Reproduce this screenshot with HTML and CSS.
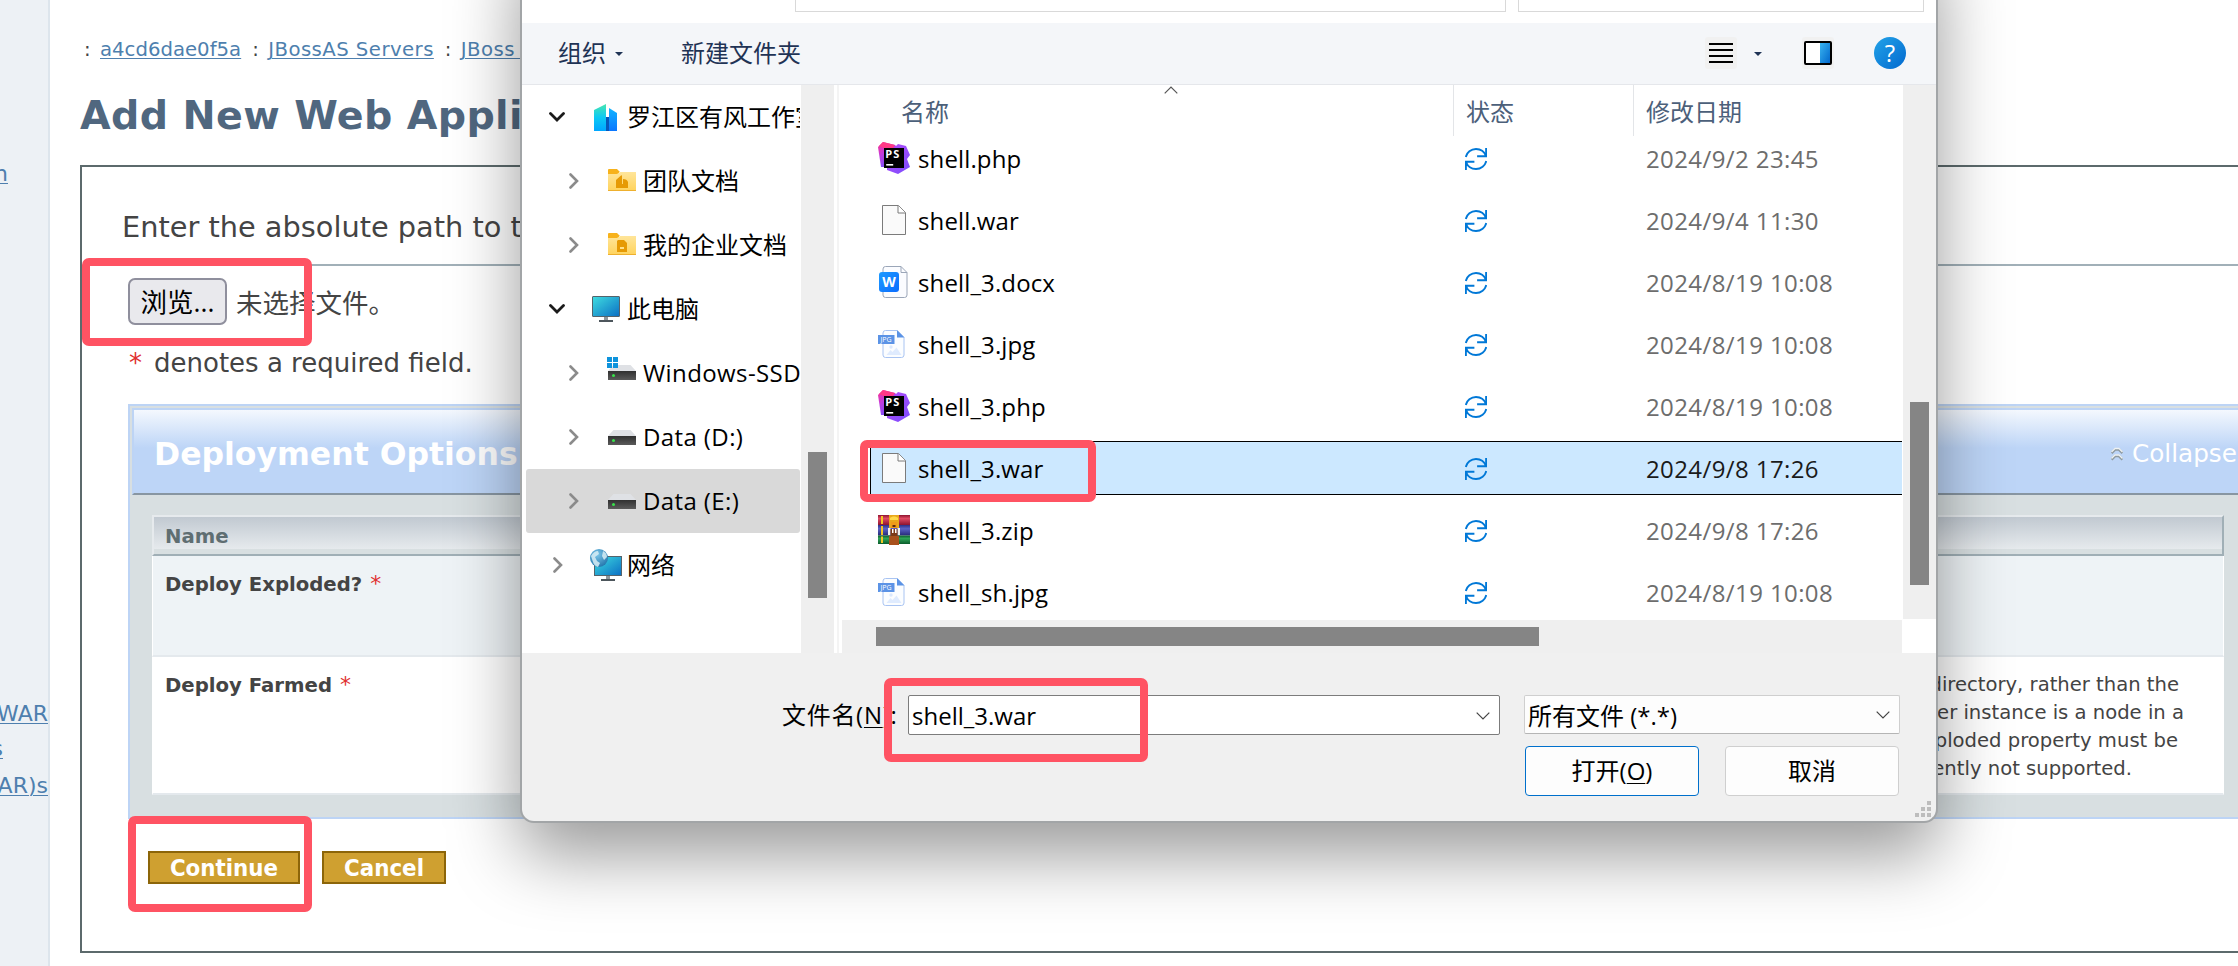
FILE: index.html
```html
<!DOCTYPE html>
<html lang="zh-CN">
<head>
<meta charset="utf-8">
<title>Add New Web Application</title>
<link rel="stylesheet" href="styles.css">
</head>
<body>
<svg class="defs" width="0" height="0" aria-hidden="true">
  <defs>
    <linearGradient id="gPink" x1="0" y1="0" x2="0.6" y2="1"><stop offset="0" stop-color="#ff318c"/><stop offset=".45" stop-color="#c03be0"/><stop offset="1" stop-color="#6b57ff"/></linearGradient>
    <linearGradient id="gViolet" x1="0" y1="0" x2="1" y2="1"><stop offset="0" stop-color="#b74af7"/><stop offset="1" stop-color="#7a4dff"/></linearGradient>
    <linearGradient id="gDoc" x1="0" y1="0" x2="1" y2="1"><stop offset="0" stop-color="#1e9bff"/><stop offset="1" stop-color="#0a6cff"/></linearGradient>
    <linearGradient id="gFolder" x1="0" y1="0" x2="0" y2="1"><stop offset="0" stop-color="#ffe59a"/><stop offset="1" stop-color="#ffd35c"/></linearGradient>
    <linearGradient id="gScreen" x1="0" y1="0" x2="1" y2="1"><stop offset="0" stop-color="#3fdde0"/><stop offset="1" stop-color="#0b6fc4"/></linearGradient>
    <linearGradient id="gTower" x1="0" y1="0" x2="0" y2="1"><stop offset="0" stop-color="#49e6b0"/><stop offset=".5" stop-color="#0cc9f4"/><stop offset="1" stop-color="#00a6ff"/></linearGradient>
    <linearGradient id="gTower2" x1="0" y1="0" x2="0" y2="1"><stop offset="0" stop-color="#11b4ff"/><stop offset="1" stop-color="#0a76ff"/></linearGradient>
    <linearGradient id="gDrive" x1="0" y1="0" x2="0" y2="1"><stop offset="0" stop-color="#303030"/><stop offset="1" stop-color="#5a5a5a"/></linearGradient>
    <linearGradient id="gHelp" x1="0" y1="0" x2="1" y2="1"><stop offset="0" stop-color="#22a3e8"/><stop offset="1" stop-color="#0269cf"/></linearGradient>
    <linearGradient id="gPane" x1="0" y1="0" x2="1" y2="1"><stop offset="0" stop-color="#39b4f0"/><stop offset="1" stop-color="#0268cc"/></linearGradient>
    <linearGradient id="gRed" x1="0" y1="0" x2="0" y2="1"><stop offset="0" stop-color="#8d1430"/><stop offset=".35" stop-color="#e04a63"/><stop offset="1" stop-color="#8d1430"/></linearGradient>
    <linearGradient id="gBlue" x1="0" y1="0" x2="0" y2="1"><stop offset="0" stop-color="#2b2f86"/><stop offset=".35" stop-color="#5a62c6"/><stop offset="1" stop-color="#262a78"/></linearGradient>
    <linearGradient id="gGreen" x1="0" y1="0" x2="0" y2="1"><stop offset="0" stop-color="#0b5c2b"/><stop offset=".35" stop-color="#2fa457"/><stop offset="1" stop-color="#0b5c2b"/></linearGradient>
    <radialGradient id="gGlobe" cx=".4" cy=".3" r=".8"><stop offset="0" stop-color="#7cc7ea"/><stop offset="1" stop-color="#1b6ea6"/></radialGradient>
  </defs>
  <symbol id="i-down" viewBox="0 0 16 10"><path d="M1.5 1.5 8 8l6.500-6.500" fill="none" stroke="#1b1b1b" stroke-width="2.800" stroke-linecap="round"/></symbol>
  <symbol id="i-right" viewBox="0 0 10 16"><path d="M1.500 1.500 8 8l-6.500 6.500" fill="none" stroke="#8b8b8b" stroke-width="2.600" stroke-linecap="round"/></symbol>
  <symbol id="i-combo" viewBox="0 0 14 8"><path d="M.7.700 7 7 13.300.700" fill="none" stroke="#444" stroke-width="1.200"/></symbol>
  <symbol id="i-drive" viewBox="0 0 28 15"><path d="M5.500 0h17L28 6H0z" fill="#dfe1e5"/><path d="M0 6h28v9H0z" fill="url(#gDrive)"/><circle cx="5.500" cy="10.500" r="1.500" fill="#37e04a"/></symbol>
  <symbol id="i-sync" viewBox="0 0 22 22"><path d="M.8 9C1.800 4.500 6 1 11 1c4.500 0 8.300 2.600 10 7M21.100 0v8.300h-9M21.300 13C20.300 17.500 16 21 11 21c-4.500 0-8.300-2.600-10-7M.9 22v-8.300h8.500" fill="none" stroke="#0078d7" stroke-width="1.900"/></symbol>
  <symbol id="i-page" viewBox="0 0 24 30"><path d="M.5.500h16l7 7v22H.5z" fill="#fafafa" stroke="#7b7b7b"/><path d="M16 .5v7.500h7.500" fill="#fff" stroke="#7b7b7b"/></symbol>
  <symbol id="i-ps" viewBox="0 0 32 32"><path d="M0 5 5 0l12 3 5 5-4 17H3z" fill="url(#gPink)"/><path d="M16 6l4-4 8 2 4 9-3 4 3 8-12 7-11-4V24z" fill="url(#gViolet)"/><path d="M1 4 5 0l12 3-4 6z" fill="#ff3a86"/><path d="M6 6h20v20H6z" fill="#000"/><path d="M8.200 22h7v1.600h-7z" fill="#fff"/></symbol>
  <symbol id="i-docx" viewBox="0 0 30 32"><path d="M7.500.500H23l6 6V29a2.500 2.500 0 0 1-2.500 2.500h-19A2.500 2.500 0 0 1 5 29V3A2.500 2.500 0 0 1 7.500.500z" fill="#fbfcff" stroke="#9ba6b8"/><path d="M23 .5v6h6" fill="none" stroke="#9ba6b8"/><rect x="1" y="6" width="20" height="20" rx="3" fill="url(#gDoc)"/></symbol>
  <symbol id="i-jpg" viewBox="0 0 27 28"><path d="M7.500.500H19l7 7V25a2.500 2.500 0 0 1-2.500 2.500h-16A2.500 2.500 0 0 1 5 25V3A2.500 2.500 0 0 1 7.500.500z" fill="#fbfdff" stroke="#a9c4f2"/><path d="M19 0v7.500h7.500z" fill="#5b93e6"/><circle cx="13" cy="17" r="1.700" fill="#dbe8fd"/><path d="M8.500 25l4-5 2 2 4-4.500 5 7.500z" fill="#dfebfe"/><path d="M0 5h16.500v9H0z" fill="#5b93e6"/></symbol>
  <symbol id="i-zip" viewBox="0 0 32 30"><path d="M0 0h32v10H0z" fill="url(#gRed)"/><path d="M0 10h32v10.500H0z" fill="url(#gBlue)"/><path d="M0 20.500h32V29H0z" fill="url(#gGreen)"/><path d="M3 1h2v8H3zM3 11h2v9H3zM3 21.500h2V28H3z" fill="#f3c623"/><path d="M11 0h10v13H11z" fill="#e8a81d"/><path d="M12 3c2-2 6-2 8 0v2h-8z" fill="#ffd84a"/><path d="M13 7h6v6h-6z" fill="#ee9a1b"/><path d="M14.500 10h3v2h-3z" fill="#5a2b0c"/><path d="M10 13h2.500v7H10zM19.500 13H22v7h-2.500z" fill="#eee"/><path d="M12.500 14h7v7h-7z" fill="#7c3a18"/><path d="M14 14h1.500v4H14zM17 14h1.500v4H17z" fill="#fff"/><path d="M11 21h10v9H11z" fill="#a8511d"/></symbol>
</svg>

<aside class="sidebar">
  <a class="side-link side-top">Configuration</a>
  <a class="side-link side-war">WAR</a>
  <a class="side-link side-s">Applications</a>
  <a class="side-link side-wars">(WAR)s</a>
</aside>

<main class="content">
  <nav class="crumbs"><span>:</span><a>a4cd6dae0f5a</a><span>:</span><a class="wide">JBossAS Servers</a><span>:</span><a class="wide">JBoss AS</a></nav>
  <h1 class="title">Add New Web Application</h1>
  <section class="box">
    <p class="intro">Enter the absolute path to the</p>
    <div class="rule"></div>
    <div class="file-row"><button class="browse">浏览...</button><span>未选择文件。</span></div>
    <p class="required"><b class="star">*</b>denotes a required field.</p>
    <div class="panel">
      <header class="panel-head">
        <h2>Deployment Options</h2>
        <span class="collapse"><svg width="12" height="14" viewBox="0 0 12 14"><path d="M.5 6 4 2.500h4L11.500 6M.5 12.500 4 9h4l3.500 3.500" fill="none" stroke="#8e9aa0" stroke-width="2.600"/><path d="M.5 5 4 1.500h4L11.500 5M.5 11.500 4 8h4l3.500 3.500" fill="none" stroke="#eef2f4" stroke-width="1.300"/></svg>Collapse</span>
      </header>
      <div class="table">
        <div class="thead">Name</div>
        <div class="trow odd"><span class="prop">Deploy Exploded?<i>*</i></span></div>
        <div class="trow even"><span class="prop">Deploy Farmed<i>*</i></span>
          <div class="desc">
            <span class="d1">directory, rather than the</span>
            <span class="d2">server instance is a node in a</span>
            <span class="d3">exploded property must be</span>
            <span class="d4">currently not supported.</span>
          </div>
        </div>
      </div>
    </div>
    <div class="actions"><button class="gold go">Continue</button><button class="gold stop">Cancel</button></div>
  </section>
</main>

<section class="dialog">
  <div class="address"><div class="path"></div><div class="search"></div></div>
  <div class="toolbar">
    <span>组织</span><i class="caret c1"></i><span class="newdir">新建文件夹</span>
    <svg class="t-view" width="32" height="32" viewBox="0 0 32 32"><rect width="32" height="32" rx="3" fill="#f1f1f1"/><path d="M4 7h24M4 13h24M4 19h24M4 25h24" stroke="#000" stroke-width="2"/></svg>
    <i class="caret c2"></i>
    <svg class="t-pane" width="32" height="32" viewBox="0 0 32 32"><rect width="32" height="32" rx="3" fill="#f1f1f1"/><rect x="3" y="5" width="26" height="22" rx="1" fill="#fff" stroke="#000" stroke-width="2"/><path d="M18 6h10v20H18z" fill="url(#gPane)"/></svg>
    <svg class="t-help" width="32" height="32" viewBox="0 0 32 32"><circle cx="16" cy="16" r="16" fill="url(#gHelp)"/><text x="16" y="24.500" text-anchor="middle" font-size="24" font-weight="500" fill="#fff">?</text></svg>
  </div>
  <div class="panes">
    <div class="tree">
      <div class="node"><svg class="tw down"><use href="#i-down"/></svg><svg class="ic tower" viewBox="0 0 24 28"><path d="M0 7 12 1v27H0z" fill="url(#gTower)"/><path d="M15 28V5l8 5v18z" fill="url(#gTower2)"/><path d="M12 14h3v14h-3z" fill="#0757b8"/></svg><span>罗江区有风工作室</span></div>
      <div class="node sub"><svg class="tw right"><use href="#i-right"/></svg><svg class="ic folder" viewBox="0 0 28 22"><path d="M0 1q0-1 1-1h8l3 3h-1v5H0z" fill="#f7b21b"/><path d="M0 5h9l3-2h16v19H0z" fill="url(#gFolder)"/><path d="M0 21h28v1H0z" fill="#eeb02e"/><path d="M8 11l5-4.500q1-.5 1 .5V15h1v-5q4 0 5 3v6H8z" fill="#e69a04"/></svg><span>团队文档</span></div>
      <div class="node sub"><svg class="tw right"><use href="#i-right"/></svg><svg class="ic folder" viewBox="0 0 28 22"><path d="M0 1q0-1 1-1h8l3 3h-1v5H0z" fill="#f7b21b"/><path d="M0 5h9l3-2h16v19H0z" fill="url(#gFolder)"/><path d="M0 21h28v1H0z" fill="#eeb02e"/><path d="M10 7h6l3 3v9H9V8z" fill="#e69a04"/><path d="M12 14h4v2h-4z" fill="#ffe08a"/></svg><span>我的企业文档</span></div>
      <div class="node"><svg class="tw down"><use href="#i-down"/></svg><svg class="ic monitor" viewBox="0 0 28 26"><path d="M12 20h4v5h-4z" fill="#8d969c"/><path d="M7 24h14v2H7z" fill="#4d565c"/><rect x=".5" y=".5" width="27" height="20" rx=".5" fill="url(#gScreen)" stroke="#55636b"/></svg><span>此电脑</span></div>
      <div class="node sub"><svg class="tw right"><use href="#i-right"/></svg><svg class="ic win" viewBox="0 0 29 24"><g transform="translate(1 8)"><path d="M5.500 0h17L28 6H0z" fill="#dfe1e5"/><path d="M0 6h28v9H0z" fill="url(#gDrive)"/><circle cx="5.500" cy="10.500" r="1.500" fill="#37e04a"/></g><path d="M0 0h5v5H0zM6 0h5v5H6zM0 6h5v5H0zM6 6h5v5H6z" fill="#0e93dc"/></svg><span class="latin">Windows-SSD (C:)</span></div>
      <div class="node sub"><svg class="tw right"><use href="#i-right"/></svg><svg class="ic drive"><use href="#i-drive"/></svg><span class="latin">Data (D:)</span></div>
      <div class="node sub active"><svg class="tw right"><use href="#i-right"/></svg><svg class="ic drive"><use href="#i-drive"/></svg><span class="latin">Data (E:)</span></div>
      <div class="node net"><svg class="tw right"><use href="#i-right"/></svg><svg class="ic network" viewBox="0 0 32 32"><path d="M16 26h4v4h-4z" fill="#8d969c"/><path d="M11 30h14v2H11z" fill="#4d565c"/><rect x="4.500" y="7.500" width="27" height="19" fill="url(#gScreen)" stroke="#55636b"/><circle cx="9" cy="9" r="9" fill="url(#gGlobe)"/><path d="M1 7q3-5 7-5l1 3-4 3 2 4 3 2-2 4q-4-1-5-5zM13 2q4 2 4 6l-3 3-2-4z" fill="#d8edf5" opacity=".85"/></svg><span>网络</span></div>
    </div>
    <div class="tree-bar"><i></i></div>
    <div class="split"></div>
    <div class="files">
      <div class="view">
        <div class="list">
          <div class="cols"><span class="c-name">名称<svg class="sort" width="14" height="8" viewBox="0 0 14 8"><path d="M.7 7.300 7 1l6.300 6.300" fill="none" stroke="#555" stroke-width="1.200"/></svg></span><span class="c-state">状态</span><span class="c-date">修改日期</span></div>
          <div class="row"><svg class="f ps" viewBox="0 0 32 32"><use href="#i-ps"/><text x="7.300" y="15.700" font-size="11" font-weight="700" textLength="14" fill="#fff">PS</text></svg><span>shell.php</span><svg class="sync"><use href="#i-sync"/></svg><time>2024/9/2 23:45</time></div>
          <div class="row"><svg class="f page"><use href="#i-page"/></svg><span>shell.war</span><svg class="sync"><use href="#i-sync"/></svg><time>2024/9/4 11:30</time></div>
          <div class="row"><svg class="f docx" viewBox="0 0 30 32"><use href="#i-docx"/><text x="11" y="21" text-anchor="middle" font-size="14" font-weight="700" fill="#fff">W</text></svg><span>shell_3.docx</span><svg class="sync"><use href="#i-sync"/></svg><time>2024/8/19 10:08</time></div>
          <div class="row"><svg class="f jpg" viewBox="0 0 27 28"><use href="#i-jpg"/><text x="2.500" y="12.200" font-size="7" textLength="11" fill="#fff">JPG</text></svg><span>shell_3.jpg</span><svg class="sync"><use href="#i-sync"/></svg><time>2024/8/19 10:08</time></div>
          <div class="row"><svg class="f ps" viewBox="0 0 32 32"><use href="#i-ps"/><text x="7.300" y="15.700" font-size="11" font-weight="700" textLength="14" fill="#fff">PS</text></svg><span>shell_3.php</span><svg class="sync"><use href="#i-sync"/></svg><time>2024/8/19 10:08</time></div>
          <div class="row picked"><svg class="f page"><use href="#i-page"/></svg><span>shell_3.war</span><svg class="sync"><use href="#i-sync"/></svg><time>2024/9/8 17:26</time></div>
          <div class="row"><svg class="f zip"><use href="#i-zip"/></svg><span>shell_3.zip</span><svg class="sync"><use href="#i-sync"/></svg><time>2024/9/8 17:26</time></div>
          <div class="row"><svg class="f jpg" viewBox="0 0 27 28"><use href="#i-jpg"/><text x="2.500" y="12.200" font-size="7" textLength="11" fill="#fff">JPG</text></svg><span>shell_sh.jpg</span><svg class="sync"><use href="#i-sync"/></svg><time>2024/8/19 10:08</time></div>
        </div>
        <div class="v-bar"><i></i></div>
      </div>
      <div class="h-bar"><i></i></div>
    </div>
  </div>
  <footer class="foot">
    <div class="foot-row">
      <label>文件名(<u>N</u>):</label>
      <div class="combo name"><span>shell_3.war</span><svg><use href="#i-combo"/></svg></div>
      <div class="combo type"><span>所有文件 (*.*)</span><svg><use href="#i-combo"/></svg></div>
    </div>
    <div class="foot-buttons"><button class="btn open">打开(<u>O</u>)</button><button class="btn">取消</button></div>
    <svg class="grip" width="16" height="16" viewBox="0 0 16 16"><path d="M12 0h4v4h-4zM6 6h4v4H6zM12 6h4v4h-4zM0 12h4v4H0zM6 12h4v4H6zM12 12h4v4h-4z" fill="#bdbdbd"/></svg>
  </footer>
</section>

<div class="mark m-browse"></div>
<div class="mark m-file"></div>
<div class="mark m-name"></div>
<div class="mark m-continue"></div>
</body>
</html>
```

FILE: styles.css
```css
* { box-sizing: border-box; margin: 0; padding: 0; }
html, body { width: 2238px; height: 966px; overflow: hidden; }
body {
  display: flex;
  position: relative;
  background: #fff;
  color: #444;
  font-family: "DejaVu Sans", "Noto Sans CJK SC", sans-serif;
}
.defs { position: absolute; }
svg { display: block; flex: none; }
.f text, .t-help text { font-family: "Open Sans", sans-serif; }
a { color: #4e7fae; text-decoration: underline; text-decoration-thickness: 1px; text-underline-offset: 2px; }

/* sidebar */
.sidebar {
  display: flex;
  flex-direction: column;
  align-items: flex-end;
  flex: none;
  width: 50px;
  height: 966px;
  overflow: hidden;
  background: #edf1f5;
  border-right: 2px solid #dde5ec;
}
.side-link { font-size: 22px; line-height: 30px; white-space: nowrap; }
.side-top { margin: 159px 40px 0 0; }
.side-war { margin-top: 510px; }
.side-s { margin: 5px 45px 0 0; }
.side-wars { margin-top: 7px; }

/* page content */
.content { flex: none; width: 2188px; padding: 38px 0 0 30px; }
.crumbs { display: flex; height: 24px; padding-left: 4px; font-size: 19.700px; line-height: 24px; white-space: pre; }
.crumbs span { width: 16px; }
.crumbs a { margin-right: 11px; }
.crumbs .wide { letter-spacing: .45px; }
.title { height: 50px; margin-top: 29px; color: #50677f; font-size: 39.600px; letter-spacing: .35px; line-height: 49px; white-space: nowrap; }
.box {
  display: flex;
  flex-direction: column;
  width: 2200px;
  height: 788px;
  margin-top: 24px;
  padding-top: 40px;
  border: 2px solid #5c6a6c;
}
.intro { height: 40px; padding-left: 40px; font-size: 28.800px; line-height: 40px; }
.rule { height: 2px; margin: 17px 0 0 40px; background: #a1b0b8; }
.file-row { display: flex; align-items: center; gap: 9px; height: 47px; margin: 12px 0 0 46px; font-size: 26.500px; white-space: nowrap; }
.browse {
  width: 99px;
  height: 47px;
  border: 2px solid #8f8f9d;
  border-radius: 7px;
  background: #e9e9ed;
  color: #000;
  font: 26.500px/42px "Open Sans", "Noto Sans CJK SC", sans-serif;
}
.required { display: flex; height: 36px; margin: 20px 0 0 47px; font-size: 26px; line-height: 36px; }
.star { width: 25px; color: #e03030; font-weight: 400; }
.panel {
  height: 415px;
  margin: 23px 0 0 46px;
  border: 2px solid #bdd4f5;
  background: #d8dfe1;
}
.panel-head {
  display: flex;
  justify-content: space-between;
  height: 87px;
  margin: 2px 0 0 2px;
  padding: 0 61px 0 20px;
  border-top: 2px solid #bdd4f5;
  border-left: 2px solid #bdd4f5;
  border-bottom: 2px solid #8896a2;
  background: linear-gradient(#f4f8fe 0, #bdd5f7 38px);
  color: #fff;
}
.panel-head h2 { font-size: 31.500px; line-height: 88px; }
.collapse { display: flex; align-items: center; gap: 9px; width: 151px; height: 88px; margin-right: -47px; padding-bottom: 1px; font-size: 24.700px; line-height: 88px; }
.table { width: 2072px; margin: 20px 0 0 22px; }
.thead {
  height: 41px;
  padding-left: 11px;
  border: 2px solid #e6eaed;
  border-right-color: #a0afb6;
  border-bottom-color: #a0afb6;
  background: linear-gradient(#c1c9d1, #e6eaed 32px, #d8dfe1 32px);
  color: #5f6e72;
  font-size: 19.700px;
  font-weight: 700;
  line-height: 40px;
}
.trow { display: flex; justify-content: space-between; border: solid #fff; border-width: 0 1px; padding-left: 12px; }
.trow.odd { height: 101px; padding-top: 14px; border-bottom: 2px solid #e4e9ed; background: #eef3f6; }
.trow.even { height: 138px; padding-top: 14px; border-bottom: 2px solid #e4e9ed; background: #fff; }
.prop { font-size: 19.700px; font-weight: 700; line-height: 28px; }
.prop i { margin-left: 8px; color: #e03030; font-size: 22px; font-style: normal; font-weight: 400; }
.desc { display: flex; flex-direction: column; align-items: flex-end; font-size: 19.600px; line-height: 28px; white-space: nowrap; }
.d1 { margin-right: 44px; }
.d2 { margin-right: 39px; }
.d3 { margin-right: 45px; }
.d4 { margin-right: 91px; }
.actions { display: flex; gap: 22px; margin: 32px 0 0 66px; }
.gold {
  height: 33px;
  padding-top: 1px;
  border: 2px solid #8c6509;
  background: #cfa030;
  color: #fff;
  font: 700 23.800px/28px "DejaVu Sans Condensed", "DejaVu Sans", sans-serif;
  font-stretch: condensed;
}
.go { width: 152px; }
.stop { width: 124px; }

/* file dialog */
.dialog {
  position: absolute;
  left: 520px;
  top: -70px;
  width: 1418px;
  height: 893px;
  padding-top: 70px;
  border: solid #a2a5a7;
  border-width: 0 2px 2px;
  border-radius: 0 0 14px 14px;
  background: #f0f0f0;
  box-shadow: 0 32px 70px rgba(0, 0, 0, .4);
  color: #000;
  font: 24px/32px "Open Sans", "Noto Sans CJK SC", sans-serif;
  white-space: nowrap;
}
.address { display: flex; gap: 12px; height: 23px; padding-left: 273px; background: #fff; }
.address div { height: 12px; border: 1px solid #d9d9d9; border-top: 0; }
.path { width: 711px; }
.search { width: 406px; }
.toolbar {
  display: flex;
  align-items: center;
  height: 62px;
  padding-left: 36px;
  border-bottom: 1px solid #e5e7eb;
  background: #f4f6f9;
  color: #1f3355;
}
.toolbar span { margin-bottom: 1px; }
.toolbar svg { margin-bottom: 1px; }
.caret { border: solid transparent; border-width: 4px 4px 0; border-top-color: #1f3355; }
.c1 { margin-left: 9px; }
.newdir { margin-left: 58px; }
.t-view { margin-left: 904px; }
.c2 { margin-left: 17px; }
.t-pane { margin-left: 40px; }
.t-help { margin-left: 40px; }
.panes { display: flex; height: 568px; background: #fff; }
.tree { width: 279px; padding-left: 4px; overflow: hidden; }
.node { display: flex; align-items: center; width: 274px; height: 64px; padding-left: 23px; overflow: hidden; border-radius: 3px; }
.node.sub { padding-left: 43px; }
.node.net { padding-left: 27px; }
.node.active { background: #d9d9d9; }
.latin { letter-spacing: .4px; }
.tw.down { width: 16px; height: 10px; }
.tw.right { width: 10px; height: 16px; }
.ic.tower { width: 24px; height: 28px; margin: 0 9px 0 29px; }
.ic.folder { width: 28px; height: 22px; margin: 0 7px 2px 29px; }
.ic.monitor { width: 28px; height: 26px; margin: 0 7px 0 27px; }
.ic.drive { width: 28px; height: 15px; margin: 0 7px 0 29px; }
.ic.win { width: 29px; height: 24px; margin: 0 7px 9px 28px; }
.ic.network { width: 32px; height: 32px; margin: 0 5px 0 27px; }
.tree-bar { width: 33px; padding: 367px 0 0 7px; background: #efefef; }
.tree-bar i { display: block; width: 19px; height: 146px; background: #858585; }
.split { width: 5px; border: solid #fff; border-width: 0 0 0 3px; background: #f4f4f4; }
.files { display: flex; flex-direction: column; flex: 1; }
.view { display: flex; height: 535px; }
.list { width: 1064px; }
.cols { display: flex; height: 51px; color: #4c607a; line-height: 54px; }
.cols span { border-right: 1px solid #e3e5e8; }
.c-name { position: relative; width: 615px; padding-left: 62px; }
.sort { position: absolute; left: 325px; top: 1px; }
.c-state { width: 180px; padding-left: 12px; }
.cols .c-date { padding-left: 12px; border: 0; }
.row { display: flex; align-items: center; width: 1032px; height: 54px; margin: 0 0 8px 31px; border: 1px solid transparent; border-right: 0; padding-left: 7px; }
.cols + .row { margin-top: -5px; }
.row.picked { background: #cce8ff; border-color: #000; }
.row span { width: 546px; padding-top: 1px; letter-spacing: .13px; }
.row time { margin-left: 159px; padding-top: 1px; color: #6d6d6d; letter-spacing: .4px; }
.row.picked time { color: #1a1a1a; }
.sync { width: 22px; height: 22px; margin: 1px 0 0 1px; }
.f.ps { width: 32px; height: 32px; margin-right: 8px; }
.f.page { width: 24px; height: 30px; margin: 0 12px 0 4px; }
.f.docx { width: 30px; height: 32px; margin-right: 10px; }
.f.jpg { width: 27px; height: 28px; margin-right: 13px; }
.f.zip { width: 32px; height: 30px; margin-right: 8px; }
.v-bar { width: 33px; height: 534px; padding: 317px 0 0 7px; background: #efefef; }
.v-bar i { display: block; width: 19px; height: 183px; background: #858585; }
.h-bar { width: 1060px; height: 33px; margin-left: 3px; padding: 7px 0 0 34px; background: #efefef; }
.h-bar i { display: block; width: 663px; height: 19px; background: #858585; }
.foot { position: relative; padding: 42px 0 0 260px; }
.foot-row { display: flex; align-items: flex-start; height: 40px; }
.foot-row label { width: 126px; line-height: 40px; letter-spacing: .7px; }
u { text-decoration-thickness: 1px; text-underline-offset: 3px; }
.combo { display: flex; align-items: center; justify-content: space-between; padding: 2px 9px 0 3px; border: 1px solid #7c7c7c; border-radius: 2px; background: #fff; }
.combo svg { width: 14px; height: 8px; margin-bottom: 1px; }
.combo.name { width: 592px; height: 40px; }
.combo.type { width: 376px; height: 39px; margin-left: 24px; border-color: #cfcfcf; border-bottom-color: #b5b5b5; background: #fdfdfd; }
.foot-buttons { display: flex; gap: 26px; margin: 11px 0 0 743px; }
.btn { width: 174px; height: 50px; border: 1px solid #cfcfcf; border-radius: 4px; background: #fdfdfd; color: #000; font: 24px/46px "Open Sans", "Noto Sans CJK SC", sans-serif; }
.btn.open { border-color: #0070cc; }
.grip { position: absolute; right: 5px; top: 148px; }

/* highlight frames */
.mark { position: absolute; border: 8px solid #ff5363; border-radius: 7px; }
.m-browse { left: 82px; top: 258px; width: 230px; height: 88px; }
.m-file { left: 860px; top: 440px; width: 236px; height: 62px; }
.m-name { left: 884px; top: 678px; width: 264px; height: 84px; }
.m-continue { left: 128px; top: 816px; width: 184px; height: 96px; }
```
